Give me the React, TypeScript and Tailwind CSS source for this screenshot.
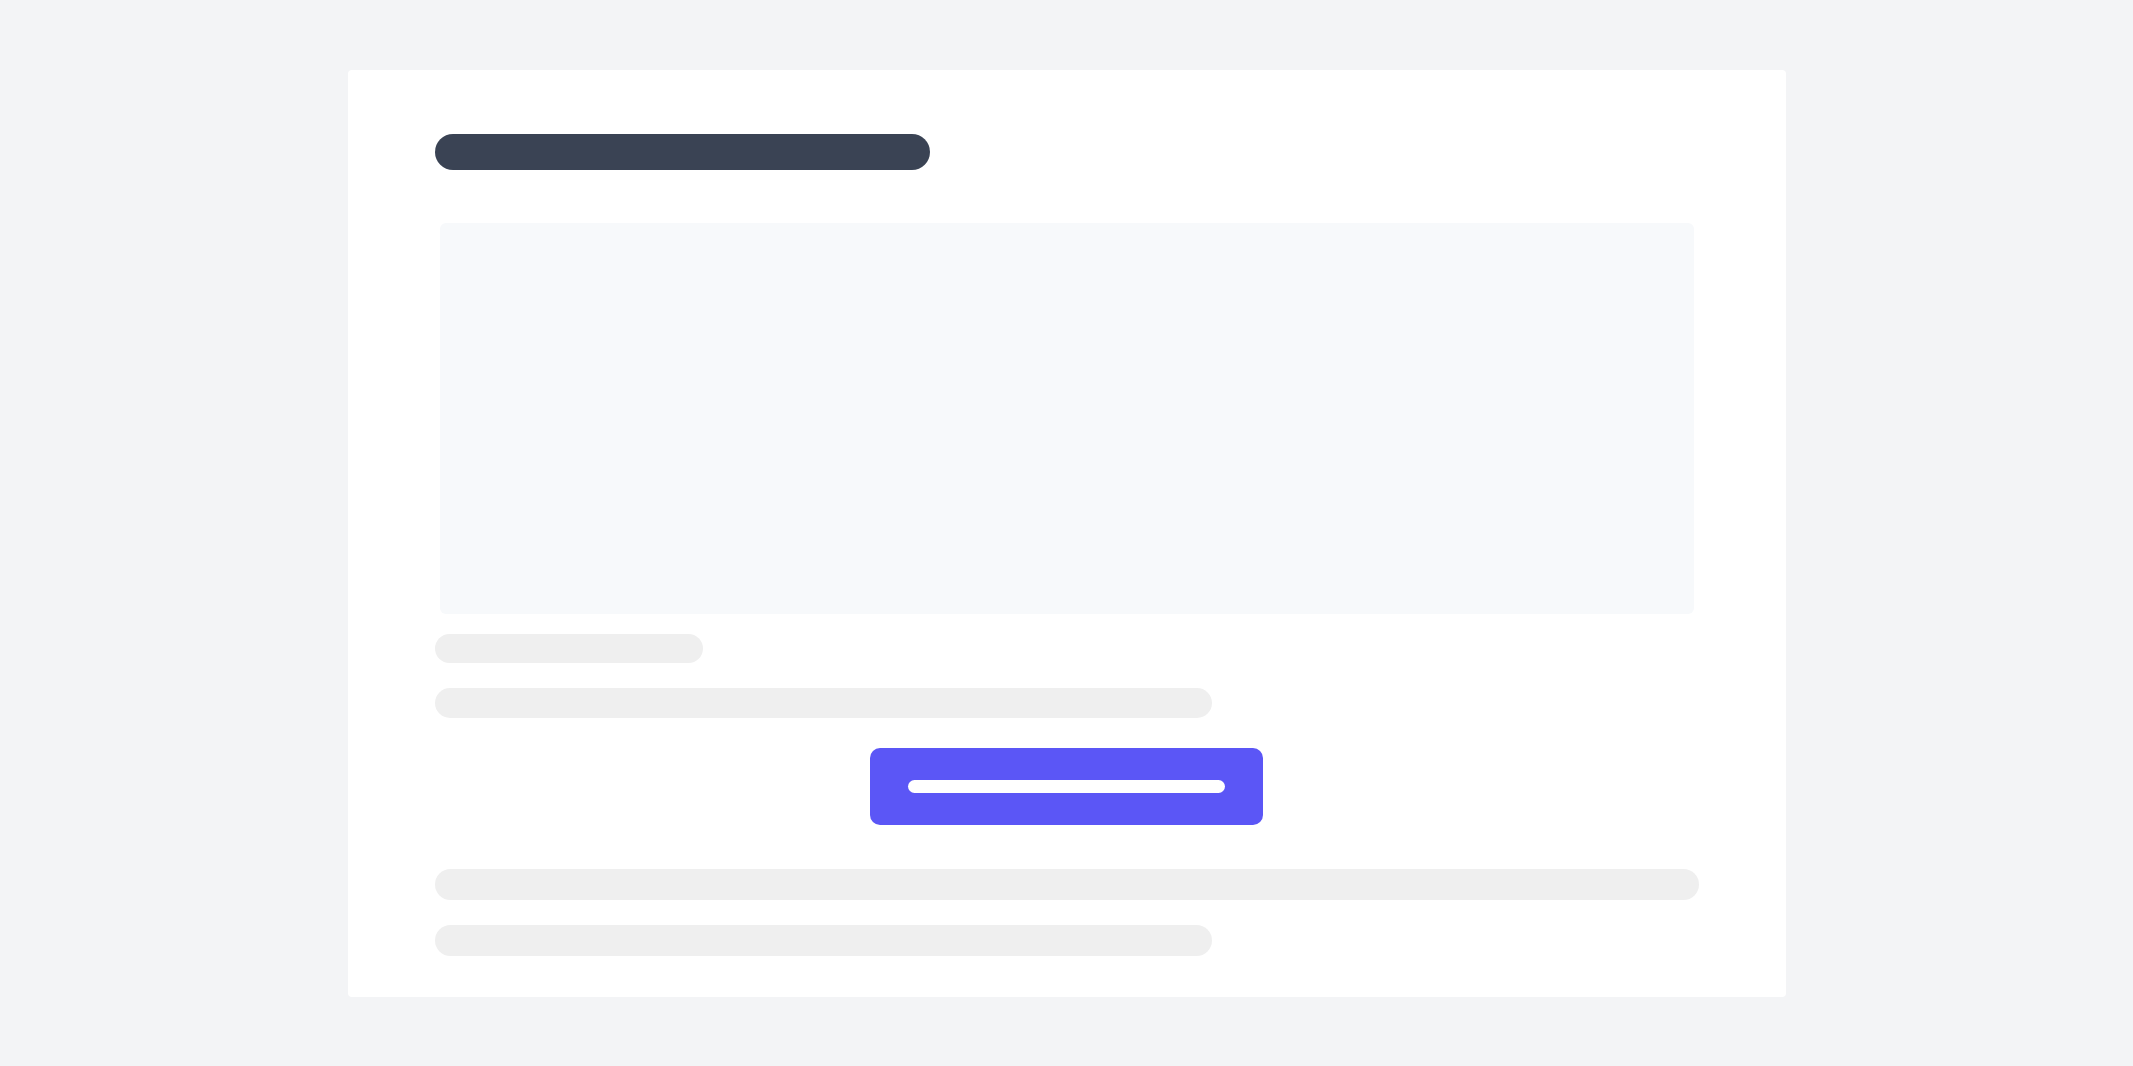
export default function App() {
  return (
    <div className="flex min-h-screen items-center justify-center bg-[#f3f4f6]">
      {/* Skeleton card */}
      <div className="flex w-[1438px] flex-col rounded-sm bg-white px-[87px] pb-[41px] pt-[64px]">
        {/* Heading */}
        <div className="h-[36px] w-[495px] rounded-full bg-[#3a4354]" />

        {/* Media block */}
        <div className="mx-[5px] mt-[53px] h-[391px] rounded-md bg-[#f7f9fb]" />

        {/* Meta lines */}
        <div className="mt-[20px] h-[29px] w-[268px] rounded-full bg-[#efefef]" />
        <div className="mt-[25px] h-[30px] w-[777px] rounded-full bg-[#efefef]" />

        {/* Action button */}
        <div className="mt-[30px] flex justify-center">
          <button className="flex h-[77px] w-[393px] items-center rounded-[10px] bg-[#5b56f6] px-[38px]">
            <span className="block h-[13px] w-full rounded-full bg-white" />
          </button>
        </div>

        {/* Footer lines */}
        <div className="mt-[44px] h-[31px] w-full rounded-full bg-[#efefef]" />
        <div className="mt-[25px] h-[31px] w-[777px] rounded-full bg-[#efefef]" />
      </div>
    </div>
  )
}
